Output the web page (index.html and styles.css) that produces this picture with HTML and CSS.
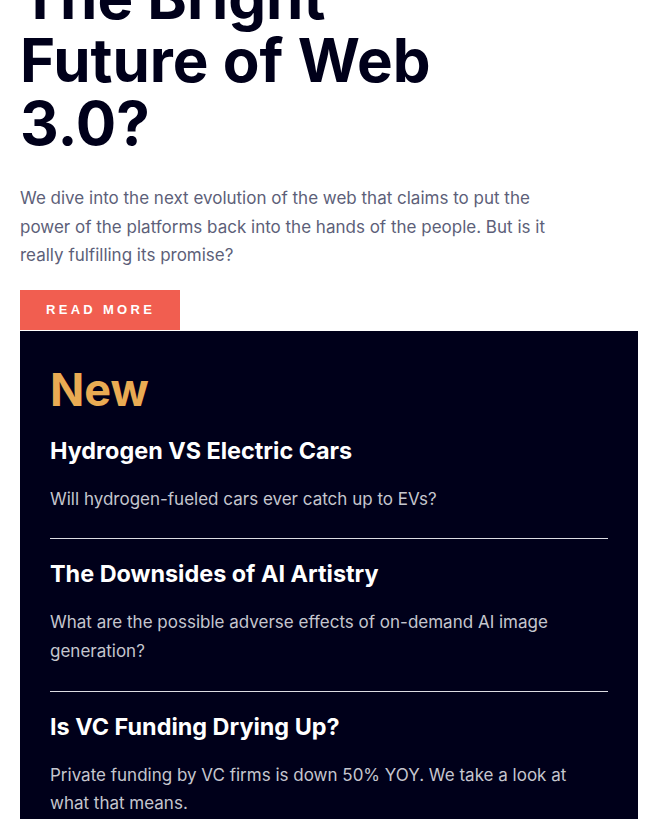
FILE: index.html
```html
<!DOCTYPE html>
<html lang="en">
<head>
<meta charset="utf-8">
<title>News homepage</title>
<link rel="stylesheet" href="styles.css">
</head>
<body>
<main class="page">
  <section class="hero">
    <h1 class="hero-title">The Bright Future of Web 3.0?</h1>
    <p class="hero-text">We dive into the next evolution of the web that claims to put the power of the platforms back into the hands of the people. But is it really fulfilling its promise?</p>
    <a class="btn" href="#">READ MORE</a>
  </section>
  <aside class="new">
    <h2 class="new-title">New</h2>
    <article class="post">
      <h3 class="post-title">Hydrogen VS Electric Cars</h3>
      <p class="post-text">Will hydrogen-fueled cars ever catch up to EVs?</p>
    </article>
    <hr class="divider">
    <article class="post">
      <h3 class="post-title">The Downsides of AI Artistry</h3>
      <p class="post-text">What are the possible adverse effects of on-demand AI image generation?</p>
    </article>
    <hr class="divider">
    <article class="post">
      <h3 class="post-title">Is VC Funding Drying Up?</h3>
      <p class="post-text">Private funding by VC firms is down 50% YOY. We take a look at what that means.</p>
    </article>
  </aside>
</main>
</body>
</html>
```
FILE: styles.css
```css
* { box-sizing: border-box; }
html, body { margin: 0; padding: 0; background: #fff; }
body {
  font-family: Inter, "Noto Sans", "Liberation Sans", sans-serif;
  color: #00001a;
  height: 831px;
  overflow: hidden;
}
.page {
  margin: -34px 13px 0 20px;
  display: flex;
  flex-direction: column;
}
.hero { display: flex; flex-direction: column; }
.hero-title {
  margin: 0;
  max-width: 440px;
  font-size: 60px;
  line-height: 63px;
  font-weight: 700;
  color: #00001a;
}
.hero-text {
  margin: 29px 0 0;
  max-width: 545px;
  font-size: 17px;
  line-height: 28.6px;
  color: #5d5f79;
}
.btn {
  margin-top: 20px;
  width: 160px;
  height: 40px;
  display: flex;
  align-items: center;
  padding-left: 26px;
  background: #f15e50;
  color: #fff;
  text-decoration: none;
  font-family: "Liberation Sans", Arial, sans-serif;
  font-weight: 700;
  font-size: 13px;
  letter-spacing: 3.3px;
}
.new {
  margin-top: 1px;
  background: #00001a;
  padding: 31px 30px 1px;
  display: flex;
  flex-direction: column;
}
.new-title {
  margin: 0 0 19px;
  font-size: 45px;
  line-height: 56px;
  font-weight: 700;
  color: #e9ab53;
}
.post-title {
  margin: 0;
  font-size: 23.4px;
  line-height: 28px;
  font-weight: 700;
  color: #fff;
}
.post-text {
  margin: 20px 0 0;
  font-size: 17px;
  line-height: 28.6px;
  color: #c5c6ce;
}
.divider {
  margin: 25px 0 21px;
  border: 0;
  border-top: 1px solid #dcdce2;
  height: 0;
}
```
